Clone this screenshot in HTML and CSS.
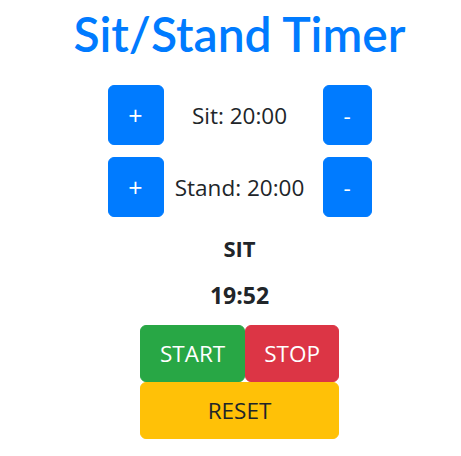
FILE: index.html
```html
<!DOCTYPE html>
<html lang="en">
<head>
<meta charset="utf-8">
<title>Sit/Stand Timer</title>
<link rel="stylesheet" href="styles.css">
</head>
<body>
<main class="app">
  <h1 class="title">Sit/Stand Timer</h1>
  <div class="settings">
    <div class="setting-row">
      <button class="btn btn-blue btn-plus">+</button>
      <span class="setting-label">Sit: 20:00</span>
      <button class="btn btn-blue btn-minus">-</button>
    </div>
    <div class="setting-row">
      <button class="btn btn-blue btn-plus">+</button>
      <span class="setting-label">Stand: 20:00</span>
      <button class="btn btn-blue btn-minus">-</button>
    </div>
  </div>
  <div class="mode">SIT</div>
  <div class="clock">19:52</div>
  <div class="controls">
    <div class="controls-top">
      <button class="btn btn-green btn-big">START</button>
      <button class="btn btn-red btn-big btn-stop">STOP</button>
    </div>
    <button class="btn btn-yellow btn-big btn-wide">RESET</button>
  </div>
</main>
</body>
</html>
```
FILE: styles.css
```css
html, body {
  margin: 0;
  padding: 0;
  background: #ffffff;
}

body {
  font-family: "Open Sans", "Noto Sans", "Liberation Sans", sans-serif;
  color: #212529;
}

.app {
  display: flex;
  flex-direction: column;
  align-items: center;
  padding-left: 18px;
}

.title {
  margin: 4px 0 21px;
  font-family: Lato, "Open Sans", sans-serif;
  font-size: 48px;
  font-weight: 600;
  line-height: 60px;
  color: #007bff;
  white-space: nowrap;
}

.settings {
  display: flex;
  flex-direction: column;
  gap: 12px;
}

.setting-row {
  display: grid;
  grid-template-columns: 56px 159px 49px;
  align-items: center;
  height: 60px;
}

.setting-label {
  text-align: center;
  font-size: 22.5px;
  white-space: nowrap;
  padding-right: 7px;
}

.btn {
  border: 1px solid transparent;
  border-radius: 6px;
  font-family: inherit;
  font-size: 22.5px;
  line-height: 35px;
  padding: 10px 19px;
  color: #ffffff;
  cursor: pointer;
}

.btn-blue {
  background: #007bff;
  border-color: #007bff;
  height: 60px;
  padding: 0;
}

.btn-plus {
  width: 56px;
  font-size: 25px;
}

.btn-minus {
  width: 49px;
}

.btn-green {
  background: #28a745;
  border-color: #28a745;
}

.btn-red {
  background: #dc3545;
  border-color: #dc3545;
}

.btn-stop {
  padding-left: 18px;
  padding-right: 18px;
}

.btn-yellow {
  background: #ffc107;
  border-color: #ffc107;
  color: #212529;
}

.mode,
.clock {
  font-size: 22px;
  font-weight: 700;
  line-height: 33px;
}

.mode {
  margin-top: 15px;
}

.clock {
  margin-top: 14px;
  font-size: 23px;
}

.controls {
  display: flex;
  flex-direction: column;
  margin-top: 13px;
}

.controls-top {
  display: flex;
}

.btn-wide {
  width: 100%;
}
```
